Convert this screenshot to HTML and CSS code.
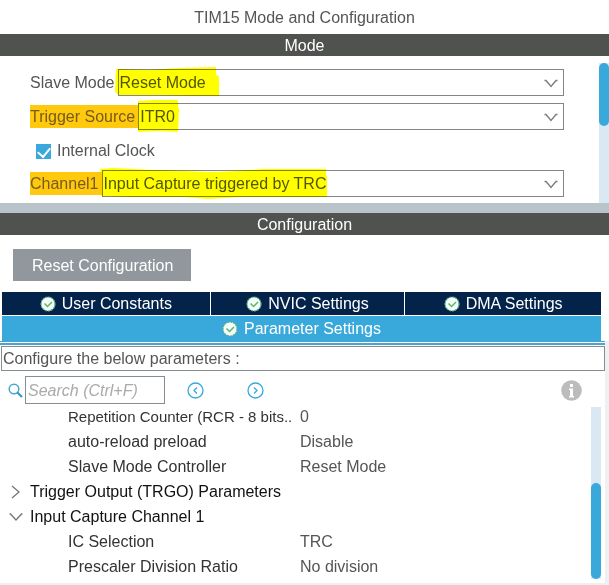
FILE: index.html
```html
<!DOCTYPE html>
<html lang="en">
<head>
<meta charset="utf-8">
<meta name="viewport" content="width=device-width, initial-scale=1">
<title>TIM15 Mode and Configuration</title>
<link rel="stylesheet" href="styles.css">
</head>
<body>
<svg class="defs" aria-hidden="true">
  <symbol id="chevron" viewBox="0 0 14 9"><path d="M0.500 1.500h1.500l5 6 5-6h1.500" fill="none" stroke="#7c7c7c" stroke-width="1.4"/></symbol>
  <symbol id="valid" viewBox="0 0 16 16">
    <circle cx="8" cy="8" r="7" fill="#f2fff7" stroke="#5fae8a" stroke-width="1.2" stroke-dasharray="2 1"/>
    <path d="M4.500 7.500l3 3 4.500-4.500" fill="none" stroke="#6aaf72" stroke-width="1.5"/>
  </symbol>
</svg>

<h1 class="title">TIM15 Mode and Configuration</h1>

<section>
  <h2 class="bar">Mode</h2>
  <div class="mode">
    <div class="fields">
      <div class="field">
        <label for="slave">Slave Mode</label>
        <div class="combo">
          <select id="slave"><option>Reset Mode</option></select>
          <svg class="arrow" aria-hidden="true"><use href="#chevron"/></svg>
          <svg class="marker" width="106" height="36" aria-hidden="true"><path d="M1 4l32 1 30-2 38-1v8l3 1v20H80l-40-1H4l-4-3z"/></svg>
        </div>
      </div>
      <div class="field">
        <label class="marked" for="trigger">Trigger Source</label>
        <div class="combo">
          <select id="trigger"><option>ITR0</option></select>
          <svg class="arrow" aria-hidden="true"><use href="#chevron"/></svg>
          <svg class="marker" width="46" height="36" aria-hidden="true"><path d="M3 2l15-1h25v7l1 1-1 24-20-1-20 1z"/></svg>
        </div>
      </div>
      <div class="check">
        <input type="checkbox" id="clock" checked>
        <label for="clock">Internal Clock</label>
      </div>
      <div class="field">
        <label class="marked" for="channel">Channel1</label>
        <div class="combo">
          <select id="channel"><option>Input Capture triggered by TRC</option></select>
          <svg class="arrow" aria-hidden="true"><use href="#chevron"/></svg>
          <svg class="marker" width="234" height="36" aria-hidden="true"><path d="M1 3l13-1 40 2 60 2 24-1 25-2h64v6l1 1v21h-84l-35 2-25-2H30l-28-1V8z"/></svg>
        </div>
      </div>
    </div>
    <div class="track"><div class="thumb thumb-top"></div></div>
  </div>
</section>

<div class="splitter"></div>

<section>
  <h2 class="bar">Configuration</h2>
  <div class="actions"><button class="reset" type="button">Reset Configuration</button></div>
  <div class="tabs">
    <button class="tab" type="button"><svg aria-hidden="true"><use href="#valid"/></svg>User Constants</button>
    <button class="tab" type="button"><svg aria-hidden="true"><use href="#valid"/></svg>NVIC Settings</button>
    <button class="tab" type="button"><svg aria-hidden="true"><use href="#valid"/></svg>DMA Settings</button>
    <button class="tab active" type="button"><svg aria-hidden="true"><use href="#valid"/></svg>Parameter Settings</button>
  </div>
  <div class="panel">
    <p class="hint">Configure the below parameters :</p>
    <div class="search">
      <svg class="lens" viewBox="0 0 15 15" aria-hidden="true"><circle cx="6" cy="6" r="4.800" fill="none" stroke="#4aa6cf" stroke-width="1.500"/><path d="M9.500 9.500l4.500 4.500" stroke="#2f9bcb" stroke-width="2.200"/></svg>
      <input type="text" placeholder="Search (Ctrl+F)" aria-label="Search">
      <button class="nav" type="button" aria-label="Previous"><svg viewBox="0 0 17 17"><circle cx="8.500" cy="8.500" r="7.500"/><path d="M10 5.500l-3 3 3 3"/></svg></button>
      <button class="nav" type="button" aria-label="Next"><svg viewBox="0 0 17 17"><circle cx="8.500" cy="8.500" r="7.500"/><path d="M7 5.500l3 3-3 3"/></svg></button>
      <button class="info" type="button" aria-label="Information"><svg viewBox="0 0 21 21"><circle cx="10.500" cy="10.500" r="10.300" fill="#bcbcbc"/><path d="M9 4h3v3H9zM8 8.500h4V16h1v1.500H8V16h1v-6H8z" fill="#fff"/></svg></button>
    </div>
    <div class="tree">
      <table>
        <colgroup><col class="name"><col></colgroup>
        <tbody>
          <tr><td class="long">Repetition Counter (RCR - 8 bits..</td><td>0</td></tr>
          <tr><td>auto-reload preload</td><td>Disable</td></tr>
          <tr><td>Slave Mode Controller</td><td>Reset Mode</td></tr>
          <tr class="group"><th colspan="2" scope="rowgroup"><svg viewBox="0 0 14 14" aria-hidden="true"><path d="M3 1l7 6-7 6"/></svg>Trigger Output (TRGO) Parameters</th></tr>
          <tr class="group"><th colspan="2" scope="rowgroup"><svg viewBox="0 0 14 14" aria-hidden="true"><path d="M0.500 4h1l5.500 6 5.500-6h1"/></svg>Input Capture Channel 1</th></tr>
          <tr><td>IC Selection</td><td>TRC</td></tr>
          <tr><td>Prescaler Division Ratio</td><td>No division</td></tr>
        </tbody>
      </table>
      <div class="track"><div class="thumb thumb-bottom"></div></div>
    </div>
  </div>
</section>
</body>
</html>
```
FILE: styles.css
```css
* { box-sizing: border-box; }
body {
  margin: 0;
  background: #fff;
  color: #555;
  font: 16px/22px "Liberation Sans", Arial, sans-serif;
}
button, input, select { font: inherit; color: inherit; }
button { border: 0; padding: 0; background: none; }
svg { display: block; flex: none; }
.defs { position: absolute; width: 0; height: 0; }

.title {
  margin: 0;
  height: 34px;
  line-height: 36px;
  font-size: 16px;
  font-weight: normal;
  text-align: center;
}
.bar {
  margin: 0;
  background: #50524f;
  color: #fff;
  font-size: 16px;
  font-weight: normal;
  line-height: 24px;
  height: 22px;
  text-align: center;
}

.mode { display: flex; padding-top: 7px; }
.fields {
  flex: 1;
  display: flex;
  flex-direction: column;
  gap: 7px;
  padding: 6px 35px 6px 30px;
}
.field { display: flex; align-items: center; }
.field label { padding-right: 3px; line-height: 23px; }
.field .marked { background: #ffc90e; color: #775b1a; }
.combo { position: relative; flex: 1; }
.combo select {
  display: block;
  width: 100%;
  height: 27px;
  padding: 1px 1px 0;
  border: 1px solid #858585;
  border-radius: 0;
  background: #fff;
  appearance: none;
}
.arrow { position: absolute; right: 6px; top: 10px; width: 14px; height: 9px; }
.marker {
  position: absolute;
  left: -3px;
  top: -4px;
  fill: #ff0;
  mix-blend-mode: multiply;
  pointer-events: none;
}
.check { display: flex; align-items: center; gap: 6px; height: 26px; padding: 2px 0 0 6px; }
.check input {
  display: grid;
  place-items: start center;
  appearance: none;
  width: 15px;
  height: 15px;
  margin: 0;
  background: #39a9dc;
}
.check input:checked::before {
  content: "";
  width: 6px;
  height: 10px;
  margin-top: 1px;
  border: solid #fff;
  border-width: 0 2px 2px 0;
  transform: rotate(40deg);
}

.track { width: 10px; background: #dae8f4; }
.thumb { border-radius: 5px; background: #39a9dc; }
.thumb-top { height: 45%; }
.thumb-bottom { height: 56%; }
.splitter { height: 10px; background: #b8c3ca; }

.actions { padding: 14px 13px 11px; }
.reset {
  display: block;
  padding: 6px 18px 4px 19px;
  background: #91979d;
  color: #fff;
}
.tabs {
  display: grid;
  grid-template-columns: 208fr 194fr 196fr;
  gap: 1px;
  margin: 0 8px 0 2px;
}
.tab {
  display: flex;
  align-items: center;
  justify-content: center;
  gap: 6px;
  height: 23px;
  padding-top: 1px;
  background: #03234b;
  color: #fff;
}
.tab svg { width: 16px; height: 16px; }
.tab.active { grid-column: 1 / -1; height: 25px; padding-top: 0; background: #39a9dc; }

.panel {
  margin-right: 4px;
  border-top: 1px solid #4aa3d0;
  border-bottom: 2px solid #eef0f2;
  box-shadow: 4px 0 #f0f0f2;
}
.panel::before {
  content: "";
  display: block;
  height: 2px;
  margin: 1px 0;
  background: #4aa3d0;
}
.hint {
  margin: 0 0 0 1px;
  padding: 1px 1px 0;
  border: 1px solid #858e92;
}
.search { display: flex; align-items: center; padding: 5px 23px 0 8px; }
.lens { width: 15px; height: 15px; }
.search input {
  width: 140px;
  height: 28px;
  margin: 0 22px 0 2px;
  padding: 2px 2px 0;
  border: 1px solid #858e92;
  border-radius: 0;
}
.search input::placeholder { color: #aaa; font-style: italic; opacity: 1; }
.nav { width: 17px; height: 17px; margin-right: 43px; }
.nav svg { fill: none; stroke: #39a9dc; stroke-width: 1.3; }
.info { width: 21px; height: 21px; margin-left: auto; }

.tree { display: flex; padding: 0 4px 4px 0; }
.tree table { flex: 1; width: 100%; table-layout: fixed; border-collapse: collapse; }
.tree tr { height: 25px; }
.tree .name { width: 300px; }
.tree td, .tree th { padding: 0; white-space: nowrap; }
.tree td:first-child { padding-left: 68px; color: #333; }
.tree .long { font-size: 15px; }
.group th { color: #111; font-weight: normal; text-align: left; }
.group svg {
  display: inline-block;
  width: 14px;
  height: 14px;
  margin: 0 7px 0 9px;
  vertical-align: -2px;
  fill: none;
  stroke: #777;
  stroke-width: 1.3;
}
.tree .track { display: flex; flex: none; flex-direction: column; justify-content: flex-end; margin-top: 3px; }
```
